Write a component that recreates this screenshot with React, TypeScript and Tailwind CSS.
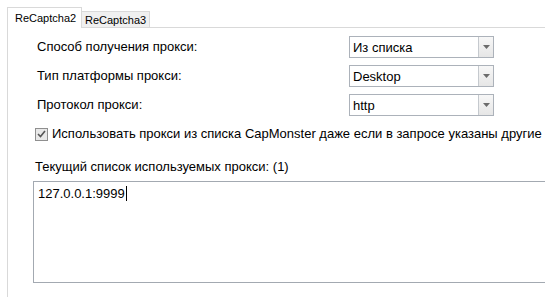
import React from "react";

function Select({ value }: { value: string }) {
  return (
    <div className="flex h-[22px] w-[145px] border border-[#acb2ba] bg-white">
      <div className="flex flex-1 items-center pl-[3px] text-[13px] leading-none text-black">{value}</div>
      <div className="flex w-[15px] items-center justify-center border-l border-[#c5c9ce] bg-gradient-to-b from-[#f7f7f7] to-[#e6e6e6]">
        <svg width="7" height="4" viewBox="0 0 7 4">
          <path d="M0 0h7L3.5 4z" fill="#6b6b6b" />
        </svg>
      </div>
    </div>
  );
}

function Row({ label, value }: { label: string; value: string }) {
  return (
    <div className="flex h-[22px] items-center">
      <div className="w-[316px] pl-[4px] text-[13px] text-black">{label}</div>
      <Select value={value} />
    </div>
  );
}

export default function App() {
  return (
    <div
      className="relative h-[297px] w-[545px] overflow-hidden bg-white pl-[7px] pt-[7px]"
      style={{ fontFamily: '"Liberation Sans", Arial, sans-serif' }}
    >
      <div className="flex items-end">
        <div className="relative z-10 -mb-px flex h-[21px] w-[75px] items-start border border-b-0 border-[#d9d9d9] bg-white pl-[7px] pt-[5px] text-[11px] leading-none text-black">
          ReCaptcha2
        </div>
        <div className="flex h-[16px] w-[68px] items-center border border-b-0 border-l-0 border-[#d9d9d9] bg-[#f0f0f0] pl-[3px] pt-px text-[11px] leading-none text-black">
          ReCaptcha3
        </div>
      </div>
      <div className="h-[280px] w-[600px] border-l border-t border-[#d9d9d9] pl-[25px] pt-[8px]">
        <div className="flex flex-col gap-[7px]">
          <Row label="Способ получения прокси:" value="Из списка" />
          <Row label="Тип платформы прокси:" value="Desktop" />
          <Row label="Протокол прокси:" value="http" />
        </div>
        <div className="mt-[8px] flex h-[20px] items-center whitespace-nowrap pl-[2px] text-[13px] text-black">
          <div className="mr-[4px] flex h-[13px] w-[13px] shrink-0 items-center justify-center border border-[#8f8f8f] bg-[#e8e8e8]">
            <svg width="9" height="8" viewBox="0 0 9 8">
              <path d="M1 4l2.5 2.5L8 1" fill="none" stroke="#555" strokeWidth="1.6" />
            </svg>
          </div>
          Использовать прокси из списка CapMonster даже если в запросе указаны другие прокси
        </div>
        <div className="mt-[13px] h-[20px] pl-[2px] text-[13px] leading-[20px] text-black">Текущий список используемых прокси: (1)</div>
        <div className="mt-[4px] h-[102px] w-[600px] border border-[#a3a9b1] pl-[4px] pt-px text-[13px] leading-[20px] text-black">
          <span>127.0.0.1:9999</span>
          <span className="ml-px inline-block h-[15px] w-px translate-y-[3px] bg-black" />
        </div>
      </div>
    </div>
  );
}
